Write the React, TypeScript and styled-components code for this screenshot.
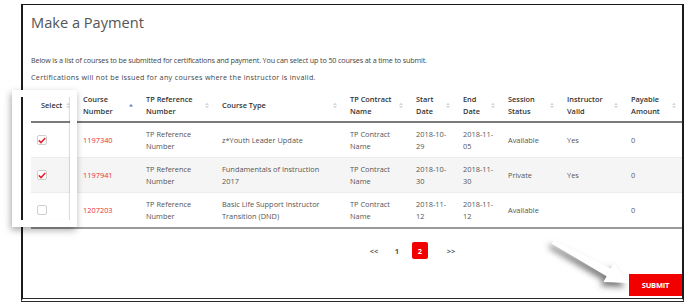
import styled, { createGlobalStyle } from 'styled-components'

const GlobalStyle = createGlobalStyle`
  body {
    margin: 0;
    background: #fff;
    font-family: "Open Sans", "Liberation Sans", sans-serif;
  }
`

const Page = styled.div`
  position: relative;
  width: 690px;
  height: 308px;
  padding: 4px 0 0 21px;
  box-sizing: border-box;
  overflow: hidden;
`

const Frame = styled.div`
  width: 663px;
  height: 298px;
  box-sizing: border-box;
  border: 2px solid #1b1b1b;
  border-top-width: 1px;
  border-bottom: 4px double #2a2a2a;
  display: flex;
  flex-direction: column;
`

const Title = styled.h1`
  margin: 8px 0 0 8px;
  font-size: 14.6px;
  line-height: 18px;
  font-weight: 400;
  color: #555;
`

const Intro = styled.div`
  margin: 23px 0 0 8px;
  display: flex;
  flex-direction: column;
  gap: 5px;
`

const Line = styled.p<{ $track?: number }>`
  margin: 0;
  font-size: 7.2px;
  line-height: 12px;
  letter-spacing: ${(p) => p.$track ?? 0}px;
  color: #444;
`

const Table = styled.table`
  margin: 6px 0 0 8px;
  width: 651px;
  border-collapse: collapse;
  table-layout: fixed;
  font-size: 7.4px;
  line-height: 12px;
`

const Th = styled.th<{ $pl?: number }>`
  height: 32px;
  padding: 0 6px 0 ${(p) => p.$pl ?? 7}px;
  border-bottom: 2px solid #7a7a7a;
  text-align: left;
  vertical-align: middle;
  font-weight: 600;
  color: #333;
`

const HeadInner = styled.div`
  display: flex;
  align-items: center;
  justify-content: space-between;
`

const Tr = styled.tr<{ $shade?: boolean }>`
  background: ${(p) => (p.$shade ? '#f5f5f5' : '#fff')};
  border-top: 1px solid #ececec;
  &:last-child {
    border-bottom: 2px solid #9a9a9a;
  }
`

const Td = styled.td<{ $pl?: number; $red?: boolean }>`
  height: 34px;
  padding: 0 6px 0 ${(p) => p.$pl ?? 7}px;
  vertical-align: middle;
  color: ${(p) => (p.$red ? '#e8303a' : '#555')};
`

const Box = styled.span`
  display: flex;
  align-items: center;
  justify-content: center;
  width: 10px;
  height: 10px;
  box-sizing: border-box;
  border: 1px solid #cfcfcf;
  border-radius: 2px;
  background: #fff;
`

const Pager = styled.div`
  margin-top: 13px;
  padding-left: 343px;
  display: flex;
  align-items: center;
  gap: 7px;
`

const PageItem = styled.span<{ $active?: boolean; $gap?: number }>`
  min-width: 16px;
  height: 17px;
  margin-left: ${(p) => p.$gap ?? 0}px;
  display: flex;
  align-items: center;
  justify-content: center;
  border-radius: 2px;
  font-size: 7.5px;
  font-weight: 700;
  color: ${(p) => (p.$active ? '#fff' : '#555')};
  background: ${(p) => (p.$active ? '#f20000' : 'transparent')};
`

const Submit = styled.button`
  margin-top: auto;
  margin-bottom: 2px;
  align-self: flex-end;
  width: 53px;
  height: 22px;
  border: none;
  background: #f20000;
  color: #fff;
  font-family: inherit;
  font-size: 7.5px;
  font-weight: 700;
  letter-spacing: -0.2px;
  padding: 0;
`

const Callout = styled.div`
  position: absolute;
  left: 12px;
  top: 90px;
  width: 65px;
  height: 137px;
  box-sizing: border-box;
  border-style: solid;
  border-color: #fff;
  border-width: 7px 7px 7px 9px;
  box-shadow: -1px 3px 7px rgba(0, 0, 0, 0.35), inset -1px 0 1px rgba(0, 0, 0, 0.15);
  pointer-events: none;
`

const Arrow = styled.svg`
  position: absolute;
  left: 540px;
  top: 235px;
  overflow: visible;
  filter: drop-shadow(-3px 4px 3px rgba(0, 0, 0, 0.55));
`

const Sort = ({ active }: { active?: boolean }) =>
  active ? (
    <svg width="4" height="7" viewBox="0 0 4 7">
      <path d="M0 4.5 L2 2 L4 4.5 Z" fill="#5a7bd6" />
    </svg>
  ) : (
    <svg width="4" height="7" viewBox="0 0 4 7">
      <path d="M0 3 L2 0.8 L4 3 Z M0 4 L2 6.2 L4 4 Z" fill="#d6d6d6" />
    </svg>
  )

const Check = ({ on }: { on: boolean }) => (
  <Box>
    {on && (
      <svg width="8" height="7" viewBox="0 0 8 7">
        <path d="M0.8 3.4 L3 5.6 L7.3 1" fill="none" stroke="#e8202a" strokeWidth="1.5" />
      </svg>
    )}
  </Box>
)

const columns = [
  { label: 'Select', width: 45, pl: 10 },
  { label: 'Course Number', width: 63, active: true },
  { label: 'TP Reference Number', width: 76 },
  { label: 'Course Type', width: 128 },
  { label: 'TP Contract Name', width: 66 },
  { label: 'Start Date', width: 47 },
  { label: 'End Date', width: 45 },
  { label: 'Session Status', width: 59 },
  { label: 'Instructor Valid', width: 64 },
  { label: 'Payable Amount', width: 58 },
]

const headLines: Record<string, string[]> = {
  Select: ['Select'],
  'Course Number': ['Course', 'Number'],
  'TP Reference Number': ['TP Reference', 'Number'],
  'Course Type': ['Course Type'],
  'TP Contract Name': ['TP Contract', 'Name'],
  'Start Date': ['Start', 'Date'],
  'End Date': ['End', 'Date'],
  'Session Status': ['Session', 'Status'],
  'Instructor Valid': ['Instructor', 'Valid'],
  'Payable Amount': ['Payable', 'Amount'],
}

const rows = [
  {
    checked: true,
    number: '1197340',
    type: ['z*Youth Leader Update'],
    start: ['2018-10-', '29'],
    end: ['2018-11-', '05'],
    status: 'Available',
    valid: 'Yes',
  },
  {
    checked: true,
    number: '1197941',
    type: ['Fundamentals of Instruction', '2017'],
    start: ['2018-10-', '30'],
    end: ['2018-11-', '30'],
    status: 'Private',
    valid: 'Yes',
  },
  {
    checked: false,
    number: '1207203',
    type: ['Basic Life Support Instructor', 'Transition (DND)'],
    start: ['2018-11-', '12'],
    end: ['2018-11-', '12'],
    status: 'Available',
    valid: '',
  },
]

const Lines = ({ lines }: { lines: string[] }) => (
  <>
    {lines.map((l, i) => (
      <div key={i}>{l}</div>
    ))}
  </>
)

export default function App() {
  return (
    <Page>
      <GlobalStyle />
      <Frame>
        <Title>Make a Payment</Title>
        <Intro>
          <Line $track={-0.15}>
            Below is a list of courses to be submitted for certifications and payment. You can select up to 50
            courses at a time to submit.
          </Line>
          <Line $track={0.3}>Certifications will not be issued for any courses where the instructor is invalid.</Line>
        </Intro>

        <Table>
          <colgroup>
            {columns.map((c) => (
              <col key={c.label} style={{ width: c.width }} />
            ))}
          </colgroup>
          <thead>
            <tr>
              {columns.map((c) => (
                <Th key={c.label} $pl={c.pl}>
                  <HeadInner>
                    <div>
                      <Lines lines={headLines[c.label]} />
                    </div>
                    <Sort active={c.active} />
                  </HeadInner>
                </Th>
              ))}
            </tr>
          </thead>
          <tbody>
            {rows.map((r, i) => (
              <Tr key={r.number} $shade={i === 1}>
                <Td $pl={6}>
                  <Check on={r.checked} />
                </Td>
                <Td $red>{r.number}</Td>
                <Td>
                  <Lines lines={['TP Reference', 'Number']} />
                </Td>
                <Td>
                  <Lines lines={r.type} />
                </Td>
                <Td>
                  <Lines lines={['TP Contract', 'Name']} />
                </Td>
                <Td>
                  <Lines lines={r.start} />
                </Td>
                <Td>
                  <Lines lines={r.end} />
                </Td>
                <Td>{r.status}</Td>
                <Td>{r.valid}</Td>
                <Td>0</Td>
              </Tr>
            ))}
          </tbody>
        </Table>

        <Pager>
          <PageItem>&lt;&lt;</PageItem>
          <PageItem>1</PageItem>
          <PageItem $active>2</PageItem>
          <PageItem $gap={8}>&gt;&gt;</PageItem>
        </Pager>

        <Submit>SUBMIT</Submit>
      </Frame>

      <Callout />

      <Arrow width="100" height="60" viewBox="0 0 100 60">
        <polygon
          points="13.2,5.2 70.8,33.6 74,27.8 88,48 63.4,47 66.6,41.2 11.8,8.8"
          fill="#fff"
        />
      </Arrow>
    </Page>
  )
}
